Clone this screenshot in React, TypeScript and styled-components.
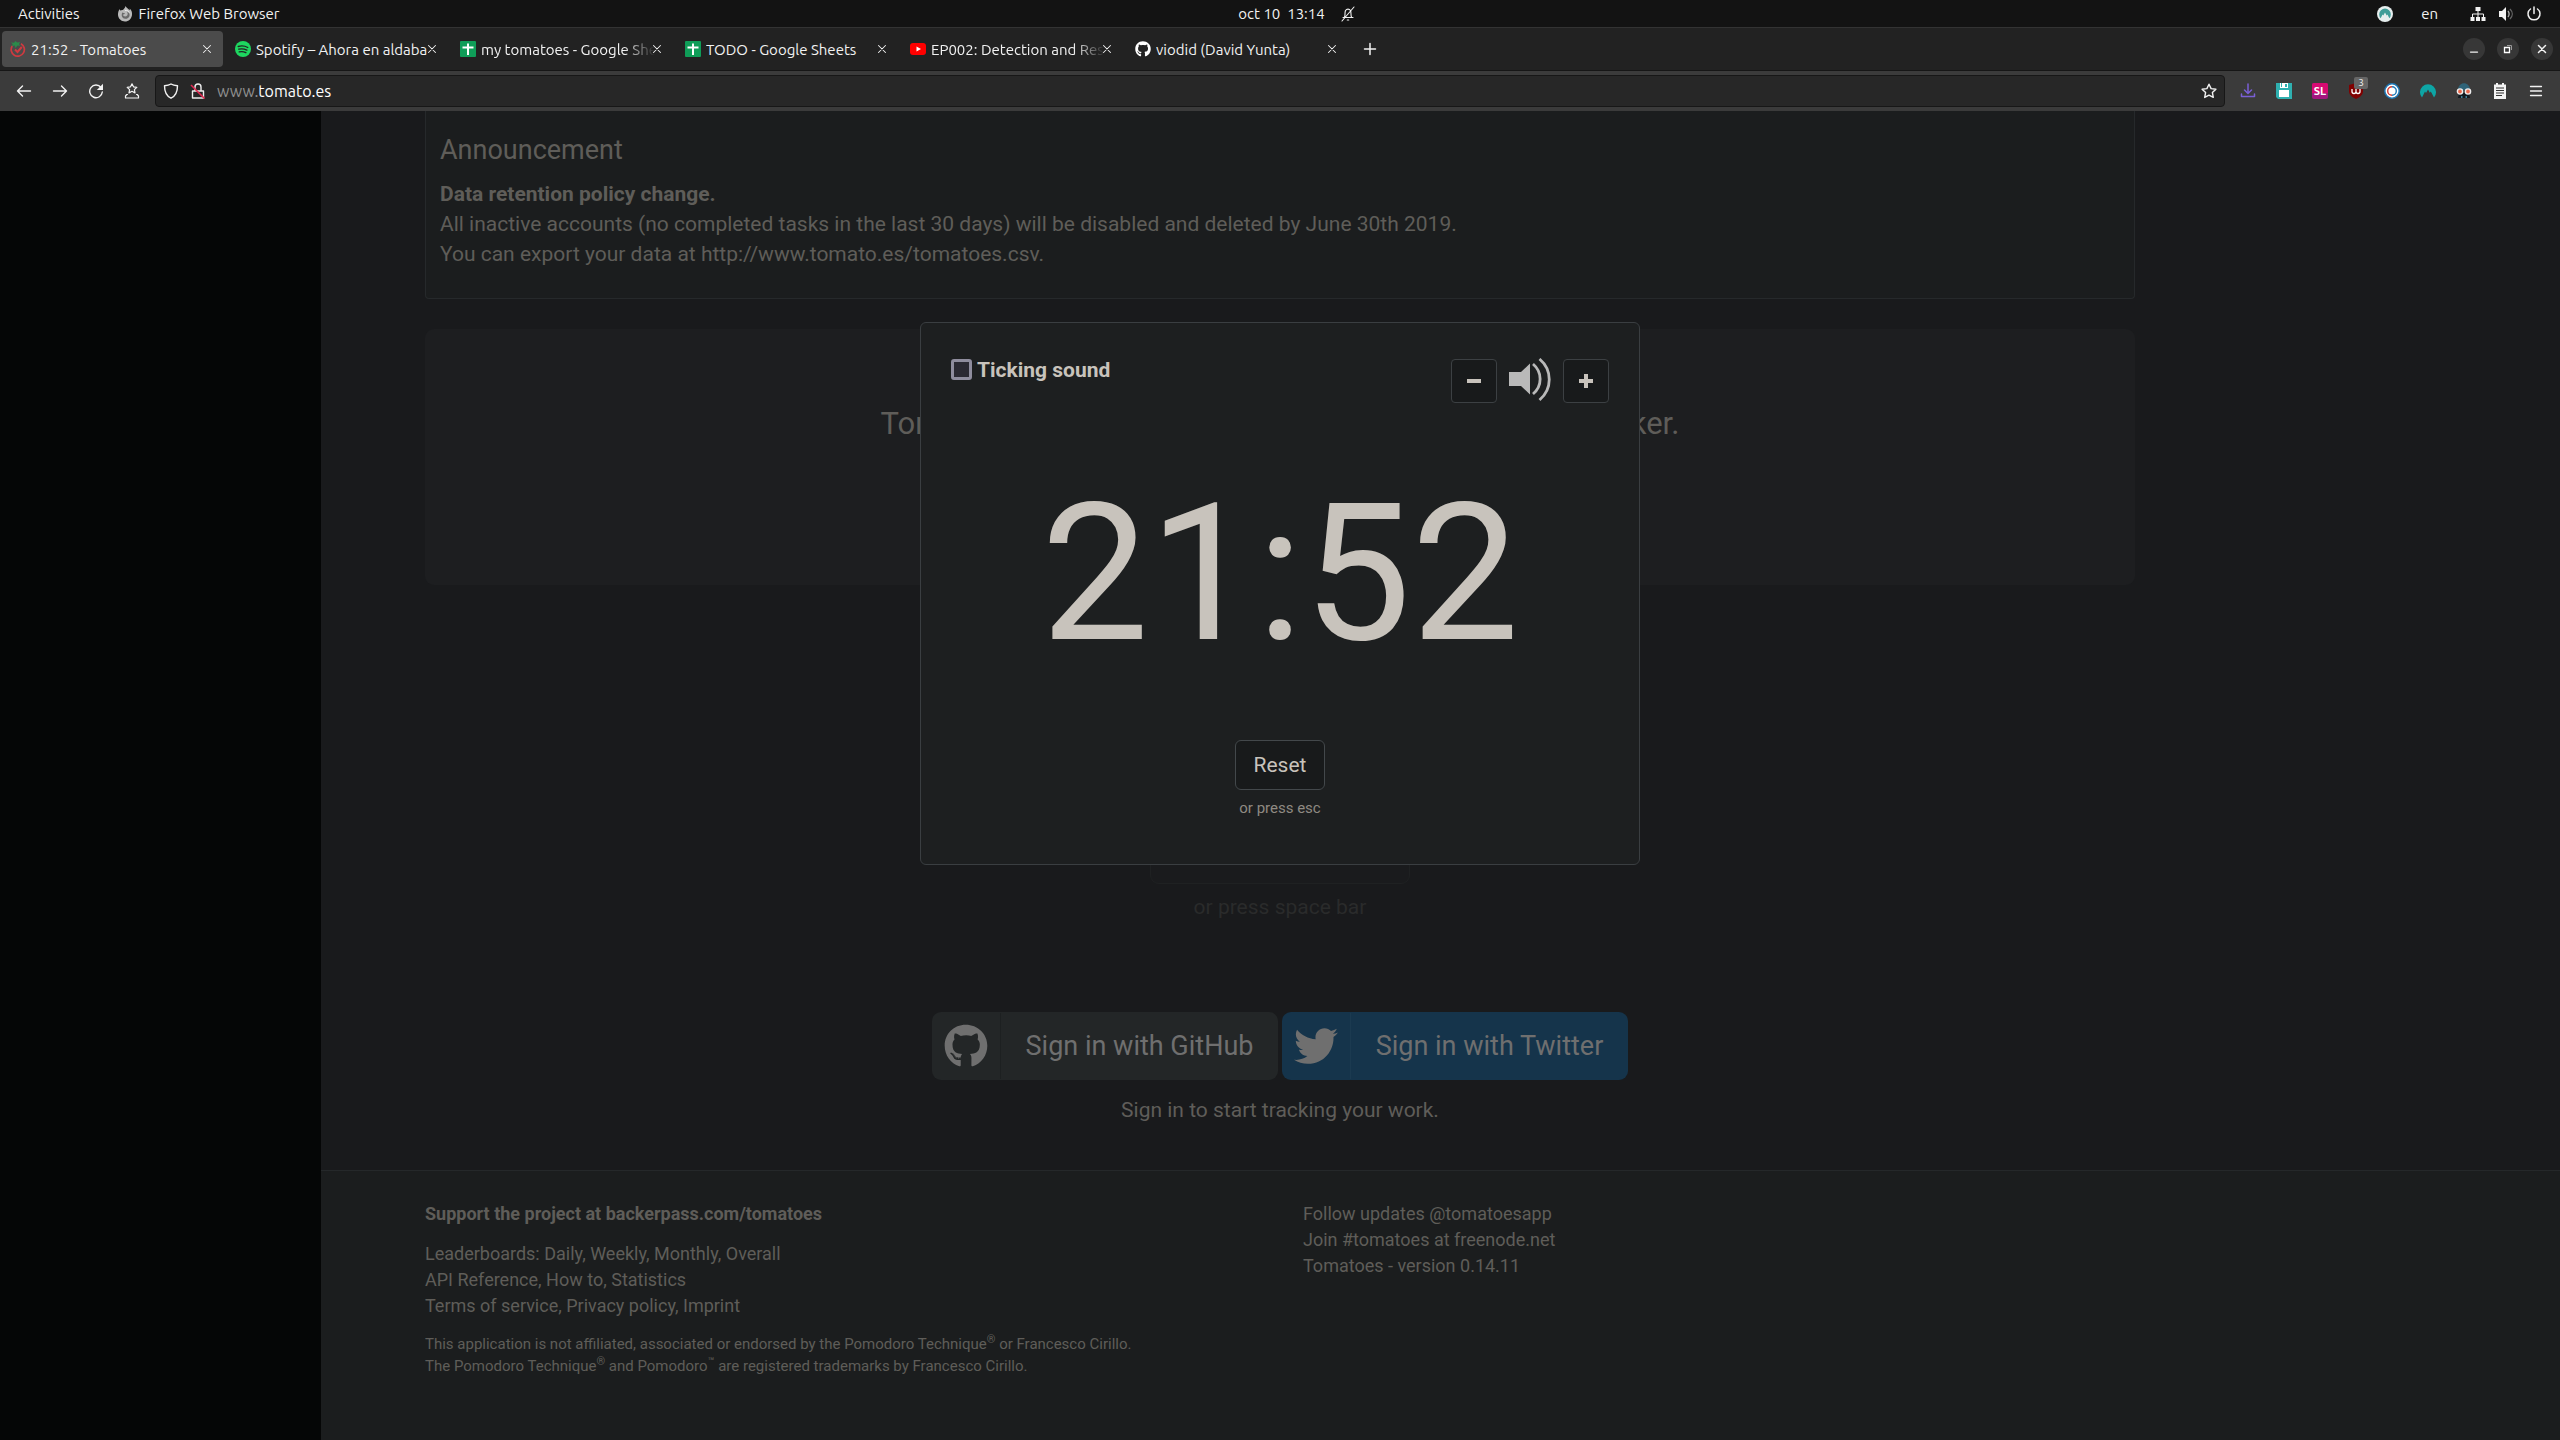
import React from 'react';
import styled, { createGlobalStyle } from 'styled-components';
import { FaGithub, FaTwitter } from 'react-icons/fa';

const ui = 'Ubuntu, "Noto Sans", sans-serif';
const page = 'Roboto, "Liberation Sans", sans-serif';

const Global = createGlobalStyle`
  *, *::before, *::after { box-sizing: border-box; }
  body { margin: 0; background: #181a1b; }
  button { font: inherit; color: inherit; background: none; border: 0; padding: 0; }
  a { color: inherit; text-decoration: none; }
  p, h1, h2 { margin: 0; }
  svg { display: block; flex: none; }
`;

const Desktop = styled.div`
  display: flex;
  flex-direction: column;
  min-height: 100vh;
  font-family: ${ui};
  font-size: 15px;
  color: #f2f2f2;
`;

/* ---------- desktop bar ---------- */
const TopBar = styled.header`
  display: grid;
  grid-template-columns: 1fr auto 1fr;
  align-items: center;
  height: 27px;
  background: #131313;
`;
const BarGroup = styled.div<{ $gap: number; $end?: boolean }>`
  display: flex;
  align-items: center;
  gap: ${p => p.$gap}px;
  padding: ${p => (p.$end ? '0 18px 0 0' : '0 0 0 18px')};
  justify-content: ${p => (p.$end ? 'flex-end' : 'flex-start')};
`;
const Indicators = styled.div`
  display: flex;
  align-items: center;
  gap: 28px;
  margin-right: 20px;
`;
const Clock = styled.div`
  display: flex;
  align-items: center;
  gap: 15px;
  padding-left: 34px;
  white-space: pre;
`;
const BarButton = styled.button`
  display: flex;
  align-items: center;
  gap: 6px;
`;

/* ---------- tabs ---------- */
const TabStrip = styled.nav`
  display: flex;
  align-items: center;
  height: 44px;
  padding: 0 7px 0 2px;
  background: #222;
  border-top: 1px solid #333;
  border-bottom: 1px solid #161616;
`;
const Tab = styled.div<{ $active?: boolean }>`
  display: flex;
  align-items: center;
  width: 221px;
  height: 36px;
  margin-right: 4px;
  padding: 0 9px 0 8px;
  gap: 5px;
  border-radius: 4px;
  background: ${p => (p.$active ? '#4b4b4b' : 'transparent')};
`;
const TabTitle = styled.span<{ $fade?: boolean }>`
  flex: 1;
  min-width: 0;
  overflow: hidden;
  white-space: nowrap;
  ${p => p.$fade && 'mask-image: linear-gradient(to right, #000 82%, transparent);'}
`;
const TabClose = styled.button`
  margin-left: -10px;
`;
const NewTab = styled.button`
  margin-left: 10px;
`;
const WindowButtons = styled.div`
  display: flex;
  gap: 12px;
  margin-left: auto;
`;
const WindowButton = styled.button`
  display: grid;
  place-items: center;
  width: 22px;
  height: 22px;
  border-radius: 50%;
  background: #373737;
`;

/* ---------- toolbar ---------- */
const Toolbar = styled.div`
  display: flex;
  align-items: center;
  height: 40px;
  padding: 0 16px;
  background: #3b3b3b;
`;
const NavButtons = styled.div`
  display: flex;
  gap: 20px;
  margin-right: 15px;
`;
const AddressBar = styled.form`
  flex: 1;
  display: flex;
  align-items: center;
  gap: 11px;
  height: 32px;
  padding: 0 7px;
  border: 1px solid #171717;
  border-radius: 4px;
  background: #272727;
`;
const Address = styled.a`
  flex: 1;
  color: #fff;
  font-size: 16px;
`;
const Dim = styled.span`
  color: #8f8f8f;
`;
const Extensions = styled.div`
  display: flex;
  gap: 20px;
  margin-left: 15px;
`;
const ExtButton = styled.button`
  position: relative;
`;
const Count = styled.span`
  position: absolute;
  top: -6px;
  right: -4px;
  width: 14px;
  border-radius: 2px;
  background: #666;
  font-size: 10px;
  line-height: 12px;
  text-align: center;
`;

/* ---------- page ---------- */
const Page = styled.main`
  position: relative;
  flex: 1;
  display: flex;
  flex-direction: column;
  background: #191a1c;
  color: #5f5d59;
  font-family: ${page};
  font-size: 21px;
  line-height: 30px;
`;
const Container = styled.div`
  width: 100%;
  max-width: 1710px;
  margin: 0 auto;
`;
const Panel = styled.section`
  height: 188px;
  padding: 22px 14px;
  border: 1px solid #26292b;
  border-top: 0;
  border-radius: 0 0 4px 4px;
  background: #1b1d1e;
`;
const PanelTitle = styled.h2`
  margin-bottom: 12px;
  font-size: 27px;
  font-weight: 400;
  line-height: 34px;
`;
const Hero = styled.section`
  height: 256px;
  margin-top: 30px;
  padding-top: 74px;
  border-radius: 9px;
  background: #1d1e20;
  text-align: center;
  font-size: 31px;
  line-height: 42px;
`;
const Centered = styled.div`
  display: flex;
  flex-direction: column;
  align-items: center;
`;
const StartButton = styled.button`
  width: 260px;
  height: 100px;
  margin-top: 199px;
  border: 1px solid #1f2122;
  border-radius: 9px;
  background: #1a1b1d;
`;
const StartHint = styled.p`
  margin-top: 8px;
  color: #2a2b2b;
`;
const SignIn = styled.div`
  display: flex;
  gap: 4px;
  margin-top: 90px;
`;
const SocialButton = styled.a<{ $bg: string; $line: string }>`
  display: flex;
  align-items: center;
  width: 346px;
  height: 68px;
  border-radius: 9px;
  background: ${p => p.$bg};
  color: #6f6f6f;
  font-size: 27px;
  & > svg { width: 68px; height: 44px; }
  & > span {
    flex: 1;
    height: 66px;
    border-left: 1px solid ${p => p.$line};
    line-height: 66px;
    text-align: center;
  }
`;
const SignInHint = styled.p`
  margin-top: 15px;
`;
const Footer = styled.footer`
  flex: 1;
  margin-top: 45px;
  padding-top: 30px;
  border-top: 1px solid #25282a;
  background: #1b1d1e;
  font-size: 18px;
  line-height: 26px;
`;
const FooterColumns = styled(Container)`
  display: grid;
  grid-template-columns: 878px 1fr;
`;
const FooterText = styled.p<{ $small?: boolean }>`
  margin-bottom: 14px;
  ${p => p.$small && 'font-size: 15px; line-height: 22px;'}
  sup { font-size: 11px; line-height: 0; }
`;
const SideShade = styled.div`
  position: absolute;
  inset: 0 auto 0 0;
  width: 321px;
  background: #050606;
`;

/* ---------- timer dialog ---------- */
const DialogLayer = styled.div`
  position: absolute;
  inset: 0;
  display: flex;
  justify-content: center;
  align-items: flex-start;
  padding-top: 211px;
`;
const Dialog = styled.div`
  width: 720px;
  height: 543px;
  padding: 30px;
  border: 1px solid #3a3e41;
  border-radius: 6px;
  background: #1d1f20;
  color: #c8c3bc;
`;
const DialogHead = styled.div`
  display: flex;
  justify-content: space-between;
  align-items: flex-start;
  height: 60px;
`;
const TickLabel = styled.label`
  display: flex;
  align-items: center;
  gap: 5px;
  height: 33px;
  font-weight: 700;
`;
const Tick = styled.input`
  appearance: none;
  width: 21px;
  height: 21px;
  margin: 0;
  border: 3px solid #8f8d9e;
  border-radius: 3px;
  background: #2b2a33;
`;
const Volume = styled.div`
  display: flex;
  align-items: center;
  gap: 10px;
  padding-top: 5px;
`;
const VolumeButton = styled.button`
  display: grid;
  place-items: center;
  width: 46px;
  height: 44px;
  border: 1px solid #3c4043;
  border-radius: 4px;
  background: #181a1b;
`;
const Counter = styled.p`
  margin-top: 46px;
  font-size: 192px;
  line-height: 230px;
  text-align: center;
`;
const ResetArea = styled(Centered)`
  margin-top: 51px;
  font-size: 15px;
  line-height: 20px;
  color: #8f8a82;
`;
const ResetButton = styled.button`
  height: 50px;
  margin-bottom: 8px;
  padding: 0 18px;
  border: 1px solid #43484b;
  border-radius: 6px;
  background: #181a1b;
  color: #c8c3bc;
  font-size: 21px;
`;

/* ---------- icons ---------- */
const Line = ({ d, size = 16, w = 1.4, color = 'currentColor' }: { d: string; size?: number; w?: number; color?: string }) => (
  <svg width={size} height={size} viewBox="0 0 16 16" fill="none" stroke={color} strokeWidth={w} strokeLinecap="round" strokeLinejoin="round"><path d={d} /></svg>
);
const CROSS = 'M4 4l8 8M12 4l-8 8';
const STAR = 'M8 1.2l2.100 4.400 4.800.6-3.500 3.400.9 4.800L8 12.100l-4.300 2.300.9-4.800L1.100 6.200l4.800-.6z';

const TomatoIcon = () => (
  <svg width="16" height="16" viewBox="0 0 16 16" fill="none"><path d="M2.200 5A6.600 6.600 0 1 0 11 2.800" stroke="#cf3a40" strokeWidth="1.700" /><path d="M5 8.500l2.500 2.500 4.300-5" stroke="#cf3a40" strokeWidth="2" /><path d="M1 1.500l3 .3L5.500 0l1.700 1.600L10 1 9 3.300l1.500 1.400-3-.2L5.500 7 4.700 4.600 1.500 5l1.400-1.800z" fill="#2c8a4a" /></svg>
);
const SpotifyIcon = () => (
  <svg width="16" height="16" viewBox="0 0 16 16"><circle cx="8" cy="8" r="8" fill="#1ed760" /><path d="M3.200 5.500c3.200-.9 6.700-.6 9.600 1M3.700 8.200c2.800-.7 5.700-.4 8.200.9M4.200 10.800c2.400-.5 4.600-.3 6.700.8" fill="none" stroke="#222" strokeWidth="1.300" strokeLinecap="round" /></svg>
);
const SheetIcon = () => (
  <svg width="16" height="16" viewBox="0 0 16 16"><rect width="16" height="16" rx="1" fill="#0f9d58" /><path d="M7 2.500h2v3h4.500v2H9V14H7V7.500H2.500v-2H7z" fill="#fff" /></svg>
);
const YoutubeIcon = () => (
  <svg width="16" height="16" viewBox="0 0 16 16"><rect y="2" width="16" height="12" rx="3" fill="#f00" /><path d="M6.500 5.500v5L11 8z" fill="#fff" /></svg>
);
const FoxIcon = () => (
  <svg width="16" height="16" viewBox="0 0 16 16"><path d="M8.500 0c.5 1.500 2.500 2.300 4 4.200C13 3.800 12.800 3 12.600 2.500 14.500 4 15.300 6.300 15 9c-.4 3.800-3.400 6.500-7 6.500S1.200 12.600 1 9c-.1-2.600.6-4.600 1.700-6 .1.700.3 1.200.7 1.600.7-.4 1.500-.6 2.300-.5C6.700 3.500 8 2 8.500 0z" fill="#b9b9b9" /><path d="M5.300 6.500c1 .4 1.700.7 2.700.7-.5 1.200-1.700.9-2 1.900.5 1.600 3 2 4.200.3.900-1.300.5-2.800-.4-3.700 2 .3 3.300 2.200 2.700 4.300-.6 2-2.500 3-4.500 2.800-2.600-.3-4.200-2.800-2.700-6.300z" fill="#6a6a6a" /><path d="M8 4.500c1.500-.6 3.500.2 4.300 2" fill="none" stroke="#efefef" /></svg>
);
const VpnIcon = ({ badge }: { badge?: boolean }) => (
  <svg width="16" height="16" viewBox="0 0 16 16">{badge && <circle cx="8" cy="8" r="8" fill="#e6eeee" />}<path d={badge ? 'M3.700 12.300A5.800 5.800 0 1 1 12.300 12.300L10.500 8.500l-.8 1L8 6.500 6.300 9.500l-.8-1z' : 'M2 14.500A8 8 0 1 1 14 14.500L10.800 8.500l-1 1.300L8 6.500 6 10 5 8.500z'} fill={badge ? '#3f9d98' : '#0ea5a5'} /></svg>
);
const Bell = () => <Line d="M3 11.500h10M4.500 11c1-2 0-4 1-6.500a3 3 0 0 1 5 0c1 2.500 0 4.500 1 6.500M7.300 14h1.400M2 15L14 1" w={1.1} />;

const favicons: Record<string, React.ReactNode> = {
  tomato: <TomatoIcon />, spotify: <SpotifyIcon />, sheet: <SheetIcon />, youtube: <YoutubeIcon />, github: <FaGithub size={16} color="#fff" />,
};
const tabs = [
  { icon: 'tomato', title: '21:52 - Tomatoes', active: true },
  { icon: 'spotify', title: 'Spotify – Ahora en aldaba' },
  { icon: 'sheet', title: 'my tomatoes - Google Sheets', fade: true },
  { icon: 'sheet', title: 'TODO - Google Sheets' },
  { icon: 'youtube', title: 'EP002: Detection and Res', fade: true },
  { icon: 'github', title: 'viodid (David Yunta)' },
];

const extensions: { name: string; icon: React.ReactNode; count?: number }[] = [
  { name: 'Downloads', icon: <Line d="M8 1v9M4.500 7L8 10.500 11.500 7M1.500 11v2.500h13V11" color="#7a5fd6" w={1.5} /> },
  { name: 'Save page', icon: <svg width="16" height="16" viewBox="0 0 16 16"><path d="M0 0h16v16H2l-2-2z" fill="#2fb0b0" /><path d="M4 0h8v5H4zM3 7h10v7H3z" fill="#fff" /><path d="M9 1h2v3H9zM5 0h1v4H5z" fill="#2fb0b0" /></svg> },
  { name: 'Language', icon: <svg width="16" height="16" viewBox="0 0 16 16"><rect width="16" height="16" rx="2" fill="#a3177f" /><path d="M2 0h12a2 2 0 0 1 2 2v8H0V2a2 2 0 0 1 2-2z" fill="#d60a72" /><text x="8" y="12" fontSize="11" fontWeight="700" textAnchor="middle" fill="#fff">SL</text></svg> },
  { name: 'Blocker', count: 3, icon: <svg width="16" height="16" viewBox="0 0 16 16"><path d="M8 0l7 2v6c0 4-3 6-7 8-4-2-7-4-7-8V2z" fill="#800000" /><path d="M4 6v2.500a2 2 0 0 0 4 0V6v2.500a2 2 0 0 0 4 0V6" fill="none" stroke="#fff" strokeWidth="1.300" /></svg> },
  { name: 'Sync', icon: <svg width="16" height="16" viewBox="0 0 16 16"><circle cx="8" cy="8" r="7.200" fill="#fff" stroke="#1f77b4" strokeWidth="1.500" /><path d="M8 3.700a4.300 4.300 0 0 1 0 8.600" fill="none" stroke="#1f77b4" strokeWidth="1.400" /><path d="M8 12.300a4.300 4.300 0 0 1 0-8.600" fill="none" stroke="#d43a2f" strokeWidth="1.400" /></svg> },
  { name: 'VPN', icon: <VpnIcon /> },
  { name: 'Privacy', icon: <svg width="16" height="16" viewBox="0 0 16 16"><path d="M2 7c0-9 12-9 12 0z" fill="#2f6378" /><path d="M3 10h10l1 5H2z" fill="#121a20" /><path d="M5 13h1.500v2H5zM9.500 13H11v2H9.500z" fill="#3f7f96" /><circle cx="4" cy="8.500" r="2.600" fill="#e8664a" stroke="#eee" strokeWidth="1.400" /><circle cx="12" cy="8.500" r="2.600" fill="#e8664a" stroke="#eee" strokeWidth="1.400" /></svg> },
  { name: 'Notes', icon: <svg width="16" height="16" viewBox="0 0 16 16"><path d="M2 1.500h2V0h2v1.500h4V0h2v1.500h2V16H2z" fill="#f4f4f4" /><path d="M4 5h8M4 7.500h8M4 10h8M4 12.500h6" stroke="#333" strokeWidth="1.100" /></svg> },
  { name: 'Menu', icon: <Line d="M2.500 3.500h11M2.500 8h11M2.500 12.500h11" w={1.3} /> },
];

const Links = ({ items }: { items: string[] }) => (
  <>{items.map((t, i) => <React.Fragment key={t}>{i > 0 && ', '}<a href="#">{t}</a></React.Fragment>)}</>
);

export default function App() {
  return (
    <Desktop>
      <Global />
      <TopBar>
        <BarGroup $gap={37}>
          <BarButton>Activities</BarButton>
          <BarButton><FoxIcon />Firefox Web Browser</BarButton>
        </BarGroup>
        <Clock><span>oct 10  13:14</span><Bell /></Clock>
        <BarGroup $gap={12} $end>
          <Indicators>
            <VpnIcon badge />
            <span>en</span>
          </Indicators>
          <svg width="16" height="16" viewBox="0 0 16 16"><path d="M5.500 1h5v4h-5zM.5 11h4v4h-4zM6 11h4v4H6zM11.500 11h4v4h-4z" fill="#f2f2f2" /><path d="M8 5v6M2.500 11V8h11v3" fill="none" stroke="#f2f2f2" /></svg>
          <svg width="16" height="16" viewBox="0 0 16 16"><path d="M1 5h3l4-4v14l-4-4H1z" fill="#f2f2f2" /><path d="M10 5c1.500 2 1.500 4 0 6" fill="none" stroke="#aaa" strokeWidth="1.300" /><path d="M12 3c3 3 3 7 0 10" fill="none" stroke="#666" strokeWidth="1.300" /></svg>
          <Line d="M8 1v6.500M4.500 3a6 6 0 1 0 7 0" w={1.5} />
        </BarGroup>
      </TopBar>

      <TabStrip>
        {tabs.map(t => (
          <Tab key={t.title} $active={t.active}>
            {favicons[t.icon]}
            <TabTitle $fade={t.fade}>{t.title}</TabTitle>
            <TabClose aria-label="Close tab"><Line d={CROSS} size={14} w={1.2} /></TabClose>
          </Tab>
        ))}
        <NewTab aria-label="New tab"><Line d="M8 2.500v11M2.500 8h11" w={1.5} /></NewTab>
        <WindowButtons>
          <WindowButton aria-label="Minimize"><Line d="M4 11.500h8" size={14} w={1.5} /></WindowButton>
          <WindowButton aria-label="Restore"><svg width="12" height="12" viewBox="0 0 12 12" fill="none"><path d="M2.500 4.500h5v5h-5z" stroke="#fff" strokeWidth="1.300" /><path d="M5 2.500h4.500V7" stroke="#999" /></svg></WindowButton>
          <WindowButton aria-label="Close"><Line d={CROSS} size={14} w={1.7} /></WindowButton>
        </WindowButtons>
      </TabStrip>

      <Toolbar>
        <NavButtons>
          <button aria-label="Back"><Line d="M14.500 8h-13M6.500 3l-5 5 5 5" /></button>
          <button aria-label="Forward"><Line d="M1.500 8h13M9.500 3l5 5-5 5" /></button>
          <button aria-label="Reload"><svg width="16" height="16" viewBox="0 0 16 16"><path d="M13 4.500A6.300 6.300 0 1 0 14.300 9" fill="none" stroke="currentColor" strokeWidth="1.400" strokeLinecap="round" /><path d="M15 .8V7H8.800z" fill="currentColor" /></svg></button>
          <button aria-label="Bookmarks"><Line d="M8 .8l1.500 3 3.300.5-2.400 2.300.6 3.300L8 8.300l-3 1.600.6-3.300-2.400-2.300 3.300-.5zM3.500 11.500H2.800L1.500 13v2h13v-2l-1.300-1.500h-.7" w={1.2} /></button>
        </NavButtons>
        <AddressBar>
          <Line d="M8 1c2 1.300 4 1.600 6.500 1.700C14.500 8.500 12.500 13 8 15.200 3.500 13 1.500 8.500 1.500 2.700 4 2.600 6 2.300 8 1z" />
          <svg width="16" height="16" viewBox="0 0 16 16" fill="none"><path d="M2.500 8h11v7h-11zM5 8V4a3 3 0 0 1 6 0v4" stroke="#eee" strokeWidth="1.400" strokeLinejoin="round" /><path d="M1 2l13.500 13.500" stroke="#e22850" strokeWidth="1.600" /></svg>
          <Address href="#"><Dim>www.</Dim>tomato.es</Address>
          <Line d={STAR} />
        </AddressBar>
        <Extensions>
          {extensions.map(e => (
            <ExtButton key={e.name} aria-label={e.name}>{e.icon}{e.count && <Count>{e.count}</Count>}</ExtButton>
          ))}
        </Extensions>
      </Toolbar>

      <Page>
        <Container>
          <Panel>
            <PanelTitle>Announcement</PanelTitle>
            <p><strong>Data retention policy change.</strong><br />All inactive accounts (no completed tasks in the last 30 days) will be disabled and deleted by June 30th 2019.<br />You can export your data at <a href="#">http://www.tomato.es/tomatoes.csv</a>.</p>
          </Panel>
          <Hero>Tomatoes is a Pomodoro Technique ® driven time tracker.</Hero>
          <Centered>
            <StartButton aria-label="Start" />
            <StartHint>or press space bar</StartHint>
            <SignIn>
              <SocialButton href="#" $bg="#232627" $line="#1d2021"><FaGithub /><span>Sign in with GitHub</span></SocialButton>
              <SocialButton href="#" $bg="#15344b" $line="#1b3a50"><FaTwitter /><span>Sign in with Twitter</span></SocialButton>
            </SignIn>
            <SignInHint>Sign in to start tracking your work.</SignInHint>
          </Centered>
        </Container>
        <Footer>
          <FooterColumns>
            <div>
              <FooterText><strong>Support the project at <a href="#">backerpass.com/tomatoes</a></strong></FooterText>
              <FooterText>
                Leaderboards: <Links items={['Daily', 'Weekly', 'Monthly', 'Overall']} /><br />
                <Links items={['API Reference', 'How to', 'Statistics']} /><br />
                <Links items={['Terms of service', 'Privacy policy', 'Imprint']} />
              </FooterText>
              <FooterText $small>
                This application is not affiliated, associated or endorsed by the Pomodoro Technique<sup>®</sup> or Francesco Cirillo.<br />
                The Pomodoro Technique<sup>®</sup> and Pomodoro<sup>™</sup> are registered trademarks by Francesco Cirillo.
              </FooterText>
            </div>
            <FooterText>
              Follow updates <a href="#">@tomatoesapp</a><br />
              Join <a href="#">#tomatoes</a> at freenode.net<br />
              Tomatoes - version 0.14.11
            </FooterText>
          </FooterColumns>
        </Footer>
        <SideShade />
        <DialogLayer>
          <Dialog role="dialog" aria-label="Timer">
            <DialogHead>
              <TickLabel><Tick type="checkbox" />Ticking sound</TickLabel>
              <Volume>
                <VolumeButton aria-label="Volume down"><svg width="16" height="16" viewBox="0 0 16 16"><path d="M1 8h14" stroke="currentColor" strokeWidth="4" /></svg></VolumeButton>
                <svg width="46" height="46" viewBox="0 0 46 46" fill="none"><path d="M2 14h12l9-8.500v31L14 28H2z" fill="#b9b9b9" /><path d="M26 6c9.500 8 9.500 22 0 30M32.500 1c13 11 13 30 0 41" stroke="#b9b9b9" strokeWidth="2.800" /></svg>
                <VolumeButton aria-label="Volume up"><svg width="16" height="16" viewBox="0 0 16 16"><path d="M8 1v14M1 8h14" stroke="currentColor" strokeWidth="4" /></svg></VolumeButton>
              </Volume>
            </DialogHead>
            <Counter>21:52</Counter>
            <ResetArea>
              <ResetButton>Reset</ResetButton>
              <span>or press esc</span>
            </ResetArea>
          </Dialog>
        </DialogLayer>
      </Page>
    </Desktop>
  );
}
